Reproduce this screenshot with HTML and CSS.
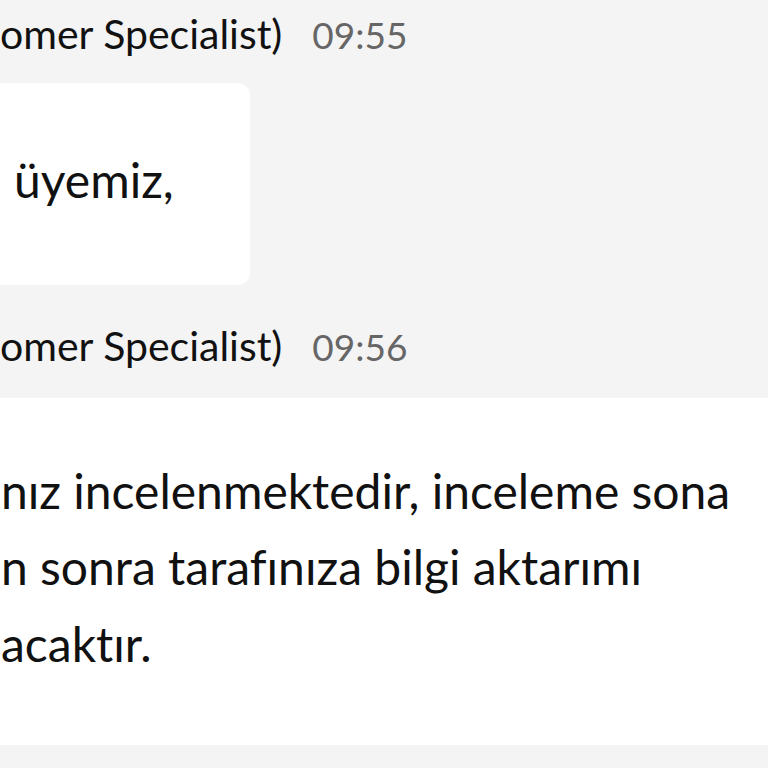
FILE: index.html
```html
<!DOCTYPE html>
<html lang="tr"><head><meta charset="utf-8"><link rel="stylesheet" href="styles.css"></head>
<body>
<div class="chat">
  <div class="meta first"><span class="name">omer Specialist)</span><span class="time">09:55</span></div>
  <div class="bubble short"><p>üyemiz,</p></div>
  <div class="meta second"><span class="name">omer Specialist)</span><span class="time">09:56</span></div>
  <div class="bubble wide">
    <p>nız incelenmektedir, inceleme sona</p>
    <p>n sonra tarafınıza bilgi aktarımı</p>
    <p>acaktır.</p>
  </div>
</div>
</body></html>
```
FILE: styles.css
```css
html,body{margin:0;padding:0;background:#f4f4f4}
body{font-family:Lato,"Open Sans",sans-serif;color:#111;overflow:hidden;height:768px;font-variant-ligatures:none}
.chat{display:flex;flex-direction:column;align-items:flex-start}
.meta{display:flex;align-items:baseline;gap:30px;font-size:41px;line-height:60px;white-space:nowrap}
.meta.first{margin-top:4px}
.meta.second{margin-top:31px}
.name{color:#111}
.time{color:#666;font-size:37px}
.bubble{background:#fff}
.bubble p{margin:0;font-size:48px;line-height:76.5px;white-space:nowrap}
.bubble.short{margin-top:18px;margin-left:-20px;width:236px;padding:59px 0 66px 34px;border-radius:12px}
.bubble.wide{margin-top:21px;align-self:stretch;padding:55px 0 63px 1px}
```
